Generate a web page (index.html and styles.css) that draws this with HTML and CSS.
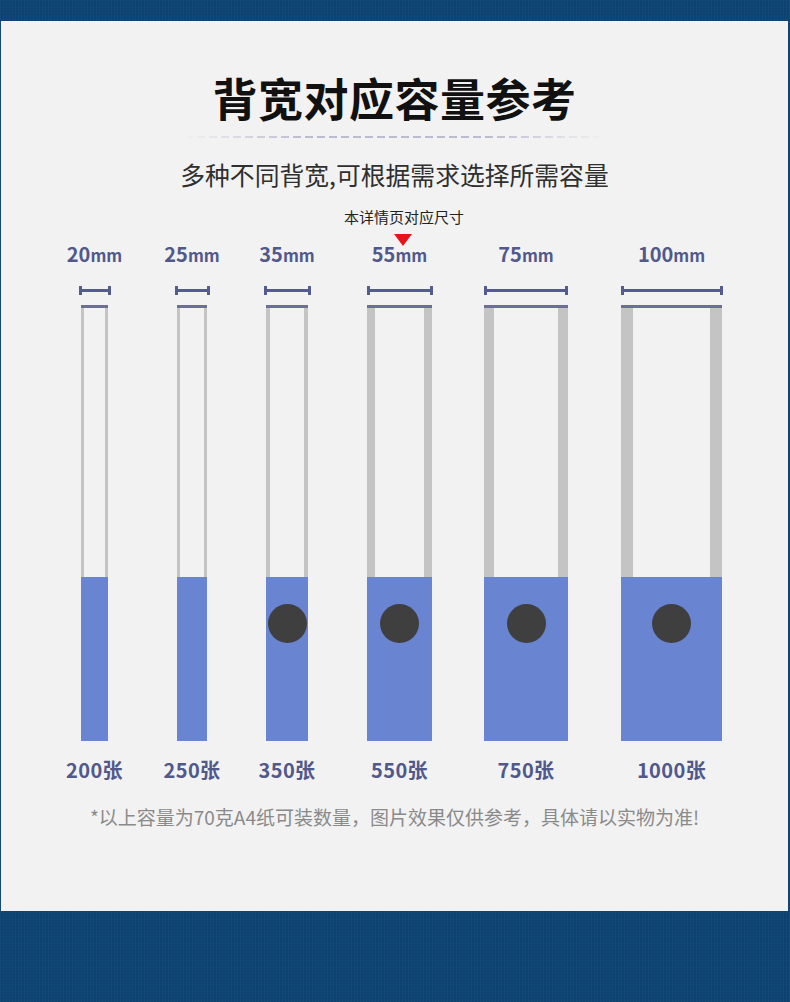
FILE: index.html
```html
<!DOCTYPE html>
<html lang="zh-CN">
<head>
<meta charset="utf-8">
<title>背宽对应容量参考</title>
<link rel="stylesheet" href="styles.css">
</head>
<body>
<div class="card">
  <header class="head">
    <h1 class="title">背宽对应容量参考</h1>
    <div class="rule"></div>
    <p class="subtitle">多种不同背宽,可根据需求选择所需容量</p>
    <p class="note">本详情页对应尺寸</p>
    <div class="pointer"></div>
  </header>

  <div class="chart">
    <div class="col s20">
      <div class="size">20<span class="unit">mm</span></div>
      <div class="measure"></div>
      <div class="binder"><div class="rails"></div><div class="fill"></div></div>
      <div class="count">200张</div>
    </div>
    <div class="col s25">
      <div class="size">25<span class="unit">mm</span></div>
      <div class="measure"></div>
      <div class="binder"><div class="rails"></div><div class="fill"></div></div>
      <div class="count">250张</div>
    </div>
    <div class="col s35">
      <div class="size">35<span class="unit">mm</span></div>
      <div class="measure"></div>
      <div class="binder"><div class="rails"></div><div class="fill"><div class="ring"></div></div></div>
      <div class="count">350张</div>
    </div>
    <div class="col s55">
      <div class="size">55<span class="unit">mm</span></div>
      <div class="measure"></div>
      <div class="binder"><div class="rails"></div><div class="fill"><div class="ring"></div></div></div>
      <div class="count">550张</div>
    </div>
    <div class="col s75">
      <div class="size">75<span class="unit">mm</span></div>
      <div class="measure"></div>
      <div class="binder"><div class="rails"></div><div class="fill"><div class="ring"></div></div></div>
      <div class="count">750张</div>
    </div>
    <div class="col s100">
      <div class="size">100<span class="unit">mm</span></div>
      <div class="measure"></div>
      <div class="binder"><div class="rails"></div><div class="fill"><div class="ring"></div></div></div>
      <div class="count">1000张</div>
    </div>
  </div>

  <p class="footnote">*以上容量为70克A4纸可装数量，图片效果仅供参考，具体请以实物为准!</p>
</div>
</body>
</html>
```

FILE: styles.css
```css
* { box-sizing: border-box; }

html, body {
  margin: 0;
  padding: 0;
}

body {
  width: 790px;
  height: 1002px;
  overflow: hidden;
  background-color: #0d4474;
  background-image:
    repeating-linear-gradient(90deg, rgba(255,255,255,0.03) 0 1px, transparent 1px 3px),
    repeating-linear-gradient(0deg, rgba(0,0,0,0.05) 0 1px, transparent 1px 3px);
  font-family: "Noto Sans CJK SC", "Noto Sans", sans-serif;
  padding-top: 21px;
}

.card {
  margin: 0 2px 0 1px;
  height: 890px;
  background: #f2f2f2;
  padding-top: 52px;
}

/* ---------- header ---------- */
.head {
  display: flex;
  flex-direction: column;
}

.title {
  margin: 0;
  text-align: center;
  font-size: 45px;
  line-height: 50px;
  font-weight: 700;
  letter-spacing: 0.5px;
  color: #111111;
}

.rule {
  width: 420px;
  height: 2px;
  margin: 13px auto 0;
  background: repeating-linear-gradient(90deg, #bcbcd0 0 8px, transparent 8px 12px);
  -webkit-mask-image: linear-gradient(90deg, transparent 0%, #000 28%, #000 72%, transparent 100%);
  mask-image: linear-gradient(90deg, transparent 0%, #000 28%, #000 72%, transparent 100%);
}

.subtitle {
  margin: 20px 0 0;
  text-align: center;
  font-size: 24.8px;
  line-height: 32px;
  font-weight: 400;
  color: #2f2f2f;
}

.note {
  margin: 17px 0 0;
  padding-left: 19px;
  text-align: center;
  font-size: 15px;
  line-height: 20px;
  color: #222222;
}

.pointer {
  width: 0;
  height: 0;
  margin: 7px 0 -4px calc(50% - 1px);
  border-left: 9px solid transparent;
  border-right: 9px solid transparent;
  border-top: 12px solid #e8121b;
}

/* ---------- chart ---------- */
.chart {
  display: flex;
  align-items: flex-start;
  padding-left: 80px;
}

.col {
  display: flex;
  flex-direction: column;
  align-items: center;
  flex: none;
}

.size {
  white-space: nowrap;
  font-size: 20px;
  line-height: 24px;
  font-weight: 700;
  color: #51588a;
}

.unit {
  font-size: 16.5px;
  font-weight: 600;
}

.measure {
  margin-top: 19px;
  height: 9px;
  flex: none;
  border-left: 3px solid #535b8f;
  border-right: 3px solid #535b8f;
  background: linear-gradient(180deg, transparent 3px, #535b8f 3px, #535b8f 6px, transparent 6px);
}

.binder {
  width: 100%;
  margin-top: 10px;
  border-top: 3px solid #6b6f93;
}

.rails {
  height: 269px;
  border-left: 3px solid #c4c4c4;
  border-right: 3px solid #c4c4c4;
}

.fill {
  height: 164px;
  background: #6985d1;
  padding-top: 27px;
}

.ring {
  width: 39px;
  height: 39px;
  margin: 0 auto;
  border-radius: 50%;
  background: #403f3f;
}

.count {
  margin-top: 17px;
  white-space: nowrap;
  font-size: 20px;
  line-height: 24px;
  font-weight: 700;
  letter-spacing: 0.4px;
  color: #51588a;
}

/* per spine width */
.s20 { width: 27px; }
.s20 .measure { width: 32px; }

.s25 { width: 30px; margin-left: 69px; }
.s25 .measure { width: 35px; }

.s35 { width: 42px; margin-left: 59px; }
.s35 .measure { width: 47px; }
.s35 .rails { border-left-width: 4px; border-right-width: 4px; }

.s55 { width: 65px; margin-left: 59px; }
.s55 .measure { width: 66px; }
.s55 .rails { border-left-width: 8px; border-right-width: 8px; }

.s75 { width: 84px; margin-left: 52px; }
.s75 .measure { width: 84px; }
.s75 .rails { border-left-width: 10px; border-right-width: 10px; }

.s100 { width: 101px; margin-left: 53px; }
.s100 .measure { width: 102px; }
.s100 .rails { border-left-width: 12px; border-right-width: 12px; }

/* ---------- footnote ---------- */
.footnote {
  margin: 22px 0 0;
  text-align: center;
  font-size: 19px;
  line-height: 26px;
  color: #8a8a8a;
}
```
